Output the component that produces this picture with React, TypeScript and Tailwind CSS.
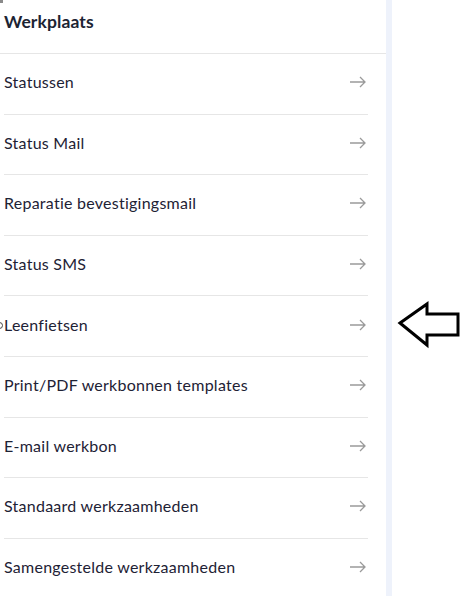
export default function App() {
  const items = [
    'Statussen',
    'Status Mail',
    'Reparatie bevestigingsmail',
    'Status SMS',
    'Leenfietsen',
    'Print/PDF werkbonnen templates',
    'E-mail werkbon',
    'Standaard werkzaamheden',
    'Samengestelde werkzaamheden',
  ];

  return (
    <div
      className="flex w-[465px] h-[596px] overflow-hidden bg-white"
      style={{ fontFamily: 'Lato, "Open Sans", sans-serif' }}
    >
      <div className="relative w-[386px] shrink-0">
        <div className="absolute left-0 top-0 w-[3px] h-[3px] bg-[#8a8a8a]" />
        <div className="h-[54px] border-b border-[#e6e6e6] pl-[4px] pt-[10px]">
          <h2 className="text-[17.5px] font-bold text-[#1c2433] leading-[24px] tracking-[0.1px]">Werkplaats</h2>
        </div>
        <div className="ml-[4px] w-[364px]">
          {items.map((item, i) => (
            <div
              key={i}
              className="h-[60.6px] flex items-center justify-between border-b border-[#e6e6e6] pb-[3px]"
            >
              <span className="flex items-center text-[16px] text-[#1e2235] tracking-[0.25px]">
                {item === 'Leenfietsen' && (
                  <span className="-ml-[4px] w-[4px] h-[8px] overflow-hidden relative inline-block">
                    <span className="absolute -left-[4px] top-[1px] w-[7px] h-[7px] rounded-full border-[1.5px] border-[#444]" />
                  </span>
                )}
                {item}
              </span>
              <svg width="17" height="12" viewBox="0 0 17 12" className="mr-[2px]" fill="none" stroke="#9a9a9a" strokeWidth="1.3">
                <path d="M1 6h15M11 1l5 5-5 5" />
              </svg>
            </div>
          ))}
        </div>
      </div>
      <div className="w-[6px] shrink-0 bg-[#eef2fb]" />
      <div className="relative flex-1">
        <svg
          width="66"
          height="50"
          viewBox="0 0 66 50"
          className="absolute left-[4px] top-[300px]"
          fill="none"
          stroke="#000"
          strokeWidth="3"
          strokeLinejoin="miter"
        >
          <path d="M4 23 L31 4 L31 14 L62 14 L62 35 L31 35 L31 45 Z" />
        </svg>
      </div>
    </div>
  );
}
